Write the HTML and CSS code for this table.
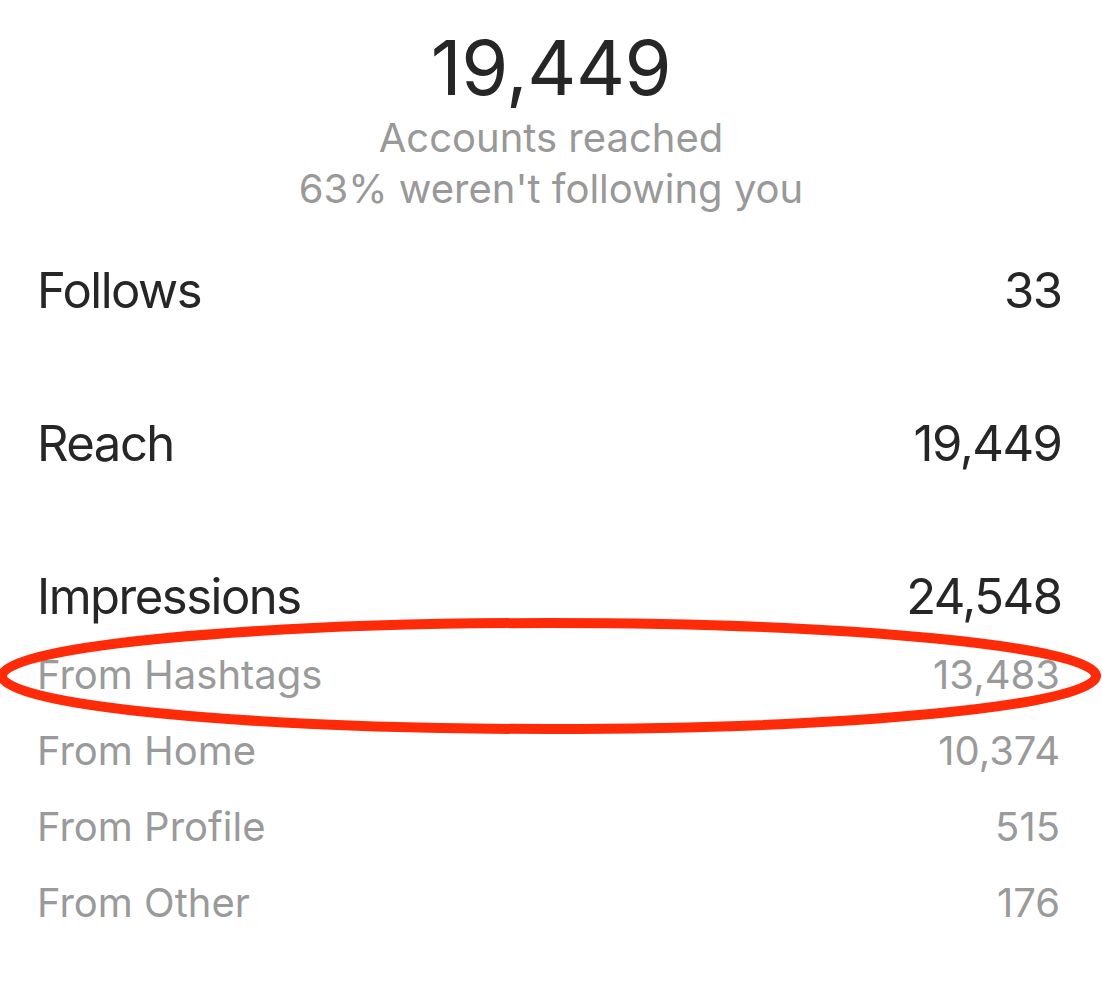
FILE: index.html
```html
<!DOCTYPE html>
<html lang="en">
<head>
  <meta charset="UTF-8" />
  <title>Post Insights</title>
  <link rel="stylesheet" href="styles.css">
</head>
<body>
  <div class="insights">
    <div class="summary">
      <div class="summary-count">19,449</div>
      <div class="summary-label">Accounts reached</div>
      <div class="summary-label">63% weren't following you</div>
    </div>

    <div class="stats">
      <div class="stat">
        <span>Follows</span>
        <span>33</span>
      </div>
      <div class="stat">
        <span>Reach</span>
        <span>19,449</span>
      </div>
      <div class="stat">
        <span>Impressions</span>
        <span>24,548</span>
      </div>
    </div>

    <div class="sources">
      <div class="source highlight">
        <span>From Hashtags</span>
        <span>13,483</span>
        <svg class="circle" width="1102" height="130" viewBox="0 0 1102 130">
          <ellipse cx="549" cy="58" rx="547" ry="53" fill="none" stroke="#ff2a08" stroke-width="10" />
        </svg>
      </div>
      <div class="source">
        <span>From Home</span>
        <span>10,374</span>
      </div>
      <div class="source">
        <span>From Profile</span>
        <span>515</span>
      </div>
      <div class="source">
        <span>From Other</span>
        <span>176</span>
      </div>
    </div>
  </div>
</body>
</html>
```

FILE: styles.css
```css
body {
  margin: 0;
  background: #ffffff;
  font-family: Inter, "Noto Sans", sans-serif;
  color: #262626;
}

.insights {
  padding: 22px 42px 40px 37px;
}

.summary {
  text-align: center;
  margin-left: -37px;
  margin-right: -42px;
}

.summary-count {
  font-size: 76px;
  line-height: 90px;
  letter-spacing: -0.5px;
}

.summary-label {
  font-size: 40px;
  line-height: 51px;
  color: #999999;
}

.stats {
  display: flex;
  flex-direction: column;
  gap: 93px;
  margin-top: 47px;
}

.stat {
  display: flex;
  justify-content: space-between;
  font-size: 49px;
  line-height: 60px;
  letter-spacing: -1.5px;
}

.stat span:last-child {
  margin-right: -1.5px;
}

.sources {
  margin-top: 10px;
}

.source {
  display: flex;
  justify-content: space-between;
  font-size: 40px;
  line-height: 76px;
  color: #9a9a9a;
}

.highlight {
  position: relative;
}

.circle {
  position: absolute;
  left: -37px;
  top: -19px;
  pointer-events: none;
}
```
